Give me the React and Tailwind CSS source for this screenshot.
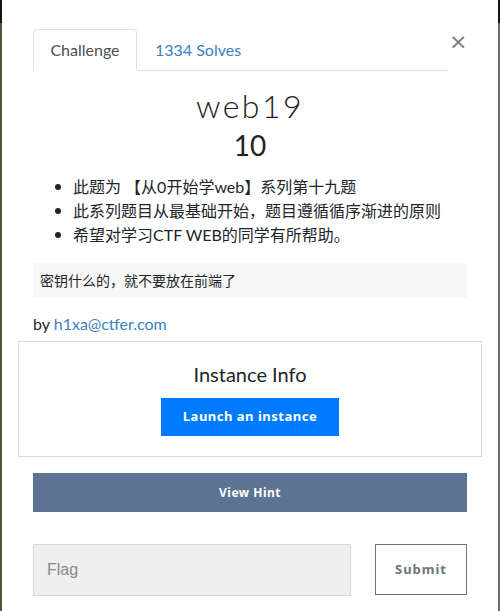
import React from "react";

const items = [
  "此题为 【从0开始学web】系列第十九题",
  "此系列题目从最基础开始，题目遵循循序渐进的原则",
  "希望对学习CTF WEB的同学有所帮助。",
];

export default function App() {
  return (
    <div className="w-[500px] h-[611px] flex bg-white overflow-hidden">
      <div className="w-[2px] h-full flex flex-col">
        <div className="h-[23px] bg-[#151515]" />
        <div className="flex-1 bg-[#5b5033]" />
      </div>
      <div className="flex-1 h-full bg-white flex flex-col font-['Lato','Noto_Sans_CJK_SC',sans-serif] text-[#212529]">
        <div className="pt-[29px] pl-[31px] pr-[45px] flex items-start">
          <div className="flex-1 flex border-b border-[#dee2e6] h-[42px]">
            <div className="w-[104px] h-[42px] border border-[#dee2e6] border-b-white rounded-t-[4px] bg-white flex items-center justify-center text-[16px] text-[#495057] -mb-px">
              Challenge
            </div>
            <div className="px-[18px] flex items-center text-[16px] text-[#3b80c2]">1334 Solves</div>
          </div>
          <div className="ml-[1px] -mr-[12px] w-[16px] mt-[2px] text-[#7a7a7a] text-[22px] leading-none font-['DejaVu_Sans',sans-serif]">×</div>
        </div>
        <div className="text-center mt-[17px] text-[32px] leading-[36px] font-light tracking-[2.5px] text-[#222]">web19</div>
        <div className="text-center mt-[5px] text-[28px] leading-[32px] text-[#222]">10</div>
        <div className="mt-[14px] flex flex-col text-[16px] leading-[24px] text-[#212529]">
          {items.map((t) => (
            <div key={t} className="flex items-center">
              <div className="ml-[53px] w-[6px] h-[6px] rounded-full bg-[#222]" />
              <div className="ml-[12px]">{t}</div>
            </div>
          ))}
        </div>
        <div className="mt-[16px] ml-[31px] mr-[31px] h-[35px] bg-[#f7f7f7] flex items-center pl-[7px] text-[14px] text-[#212529]">
          密钥什么的，就不要放在前端了
        </div>
        <div className="mt-[15px] ml-[31px] text-[16px] leading-[22px]">
          by <span className="text-[#3b80c2]">h1xa@ctfer.com</span>
        </div>
        <div className="mt-[6px] ml-[16px] mr-[16px] h-[116px] border border-[#dcdcdc] flex flex-col items-center">
          <div className="mt-[19px] text-[20px] leading-[26px] text-[#212529]">Instance Info</div>
          <div className="mt-[11px] w-[178px] h-[38px] bg-[#007bff] text-white font-bold text-[13px] tracking-[0.5px] flex items-center justify-center font-['Noto_Sans',sans-serif]">
            Launch an instance
          </div>
        </div>
        <div className="mt-[16px] ml-[31px] mr-[31px] h-[39px] bg-[#5c7391] text-white text-[12px] font-bold tracking-[0.5px] flex items-center justify-center font-['Noto_Sans',sans-serif]">
          View Hint
        </div>
        <div className="mt-[32px] ml-[31px] mr-[31px] flex justify-between">
          <div className="w-[318px] h-[52px] bg-[#efefef] border border-[#d4d7dc] flex items-center pl-[13px] text-[16px] text-[#8a8a8a] font-['Liberation_Sans',sans-serif]">
            Flag
          </div>
          <div className="w-[92px] h-[51px] border border-[#6c757d] flex items-center justify-center text-[13px] font-bold tracking-[1px] text-[#6c757d] font-['Noto_Sans',sans-serif]">
            Submit
          </div>
        </div>
      </div>
      <div className="w-[2px] h-full flex flex-col">
        <div className="h-[23px] bg-[#151515]" />
        <div className="flex-1 bg-[#6a6a6a]" />
      </div>
    </div>
  );
}
